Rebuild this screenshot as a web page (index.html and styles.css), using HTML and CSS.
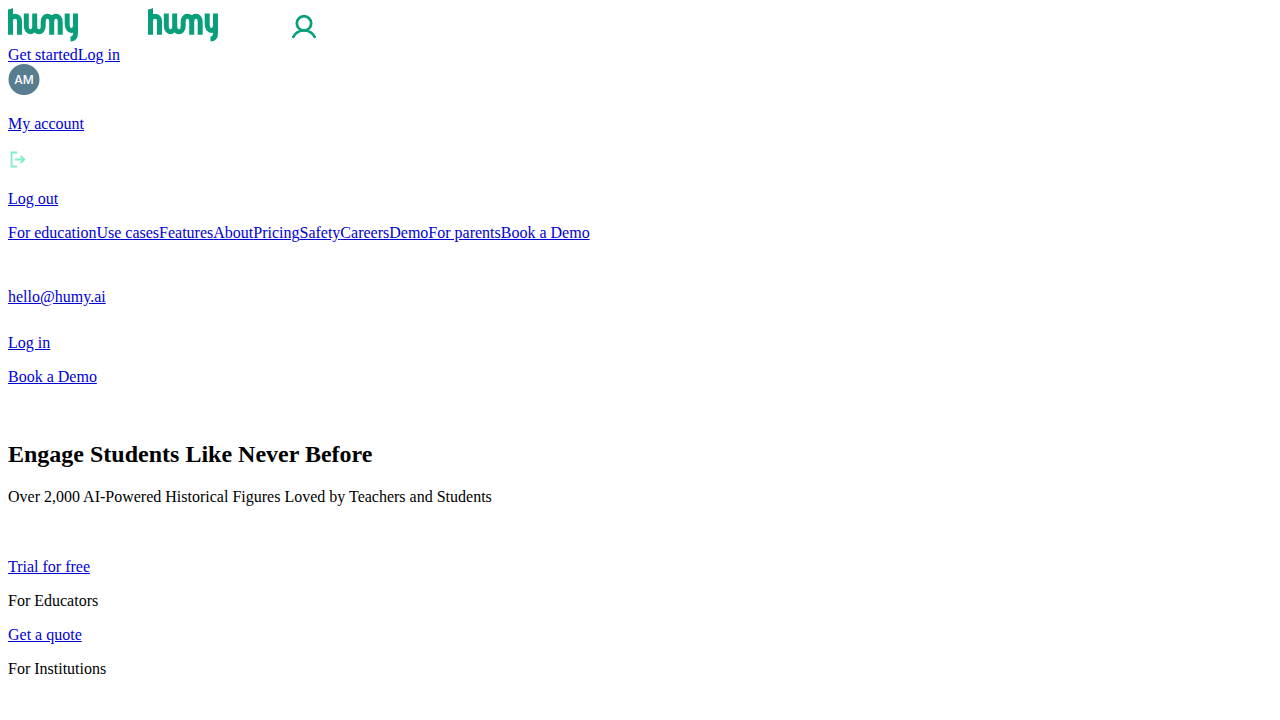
FILE: index.html
```
<!DOCTYPE html>
<html lang="en">
	<head>
		<meta charset="utf-8">
		<title>Humy</title>
		<link rel="stylesheet" href="styles.css">
	</head>
	<body>
		<svg width="0" height="0" class="symbols" aria-hidden="true">
			<symbol id="logo" viewBox="0 0 70 34">
				<g fill="none" stroke="#0a9f7b" stroke-width="5">
					<path d="M2.500 1.500V26.800M2.500 13C2.500 6.500 11.500 6.500 11.500 13V26.800"/>
					<path d="M18.300 5.500V18C18.300 25.600 26.700 25.600 26.700 18V5.500M26.700 18C26.700 25.600 35.200 25.600 35.200 18V14C35.200 6.300 43.700 6.300 43.700 14V26.800M43.700 14C43.700 6.300 52.200 6.300 52.200 14V26.800"/>
					<path d="M59.200 5.500V16C59.200 24.500 67.500 24.500 67.500 16V5.500M67.500 16V25C67.500 29.500 65.500 31 62.500 31"/>
				</g>
				<path d="M0 2L5 0V4H0Z" fill="#0a9f7b"/>
			</symbol>
		</svg>
		<header>
			<div class="bar">
				<a href="#" aria-label="Humy home"><svg class="logo" width="70" height="34"><use href="#logo"/></svg></a>
				<a href="#" aria-label="Humy home"><svg class="logo" width="70" height="34"><use href="#logo"/></svg></a>
				<a href="#" aria-label="Account">
					<svg width="24" height="32" viewBox="0 0 24 32" fill="none" stroke="#0a9f7b" stroke-width="2.700" stroke-linecap="round">
						<circle cx="12" cy="15.300" r="7.200"/>
						<path d="M1.300 28.800C3.500 24.800 7.300 22.500 12 22.500S20.500 24.800 22.700 28.800"/>
					</svg>
				</a>
			</div>
			<div><a href="#">Get started</a><a href="#">Log in</a></div>
			<div class="avatar">
				<svg width="32" height="31" viewBox="0 0 32 31">
					<circle cx="16" cy="15.500" r="15.500" fill="#587d8f"/>
					<text class="initials" x="16" y="20" text-anchor="middle">AM</text>
				</svg>
			</div>
			<p><a href="#">My account</a></p>
			<div class="logout">
				<svg width="20" height="20" viewBox="0 0 20 20" fill="none" stroke="#7eedc8" stroke-width="1.800">
					<path d="M9 3.500H3.500V17.500H9M7 10.500H16M12.500 6.800L16.300 10.500L12.500 14.200"/>
				</svg>
			</div>
			<p><a href="#">Log out</a></p>
			<nav><a href="#">For education</a><a href="#">Use cases</a><a href="#">Features</a><a href="#">About</a><a href="#">Pricing</a><a href="#">Safety</a><a href="#">Careers</a><a href="#">Demo</a><a href="#">For parents</a><a href="#">Book a Demo</a></nav>
			<div class="contact"><a href="mailto:hello@humy.ai">hello@humy.ai</a></div>
			<div class="login"><a href="#">Log in</a></div>
			<p><a href="#">Book a Demo</a></p>
		</header>
		<main>
			<h2>Engage Students Like Never Before</h2>
			<p>Over 2,000 AI-Powered Historical Figures Loved by Teachers and Students</p>
			<div class="actions">
				<a href="#">Trial for free</a>
				<p>For Educators</p>
				<a href="#">Get a quote</a>
				<p>For Institutions</p>
			</div>
		</main>
	</body>
</html>
```
FILE: styles.css
```
body {
	margin: 8px;
	background-color: #fff;
	color: #000;
	font: 16px "Liberation Serif", "Times New Roman", serif;
}
a {
	color: #0000d4;
}
p {
	margin: 16px 0;
}
.symbols {
	position: absolute;
}

/* Top row: two logos and the account icon */
.bar {
	display: flex;
	height: 38px;
}
.bar a {
	height: 34px;
}
.logo {
	margin-right: 70px;
}
.bar a:last-child {
	margin-left: 4px;
}
.avatar svg, .logout svg {
	display: block;
}
.avatar {
	padding-bottom: 4px;
}
.logout {
	padding-bottom: 5px;
}
.initials {
	fill: #fff;
	font: 500 12px Inter, sans-serif;
}

.contact {
	margin-top: 46px;
}
.login {
	margin-top: 28px;
}

h2 {
	margin: 55px 0 20px;
	font-size: 24px;
}
.actions {
	margin-top: 52px;
}
```
